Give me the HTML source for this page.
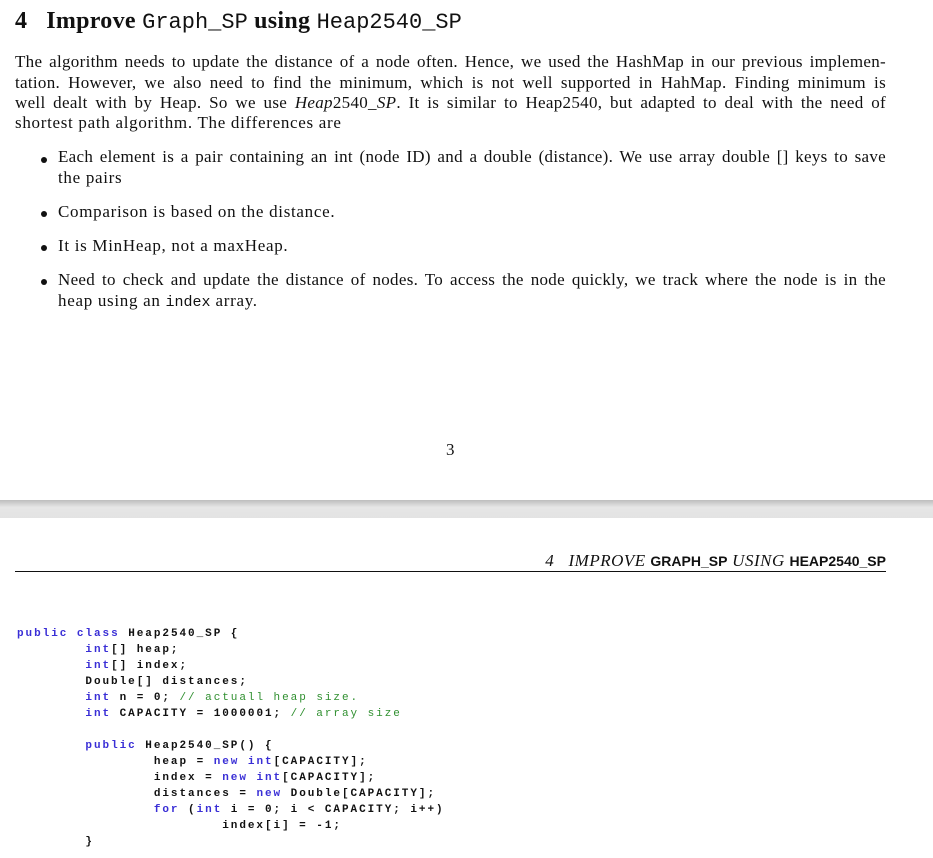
<!DOCTYPE html>
<html><head><meta charset="utf-8"><style>
body{margin:0;width:933px;height:858px;background:#fff;position:relative;overflow:hidden;font-family:"Liberation Serif",serif;color:#111}
.l{position:absolute;white-space:nowrap;font-size:17px;line-height:20px;letter-spacing:0.7px}
.j{text-align:justify;text-align-last:justify;white-space:normal;letter-spacing:0.3px}
.tt{font-family:"Liberation Mono",monospace;font-size:15px;letter-spacing:0}
.c{position:absolute;left:17px;font-family:"Liberation Mono",monospace;font-size:11px;letter-spacing:1.95px;white-space:pre;line-height:16px;color:#111;font-weight:bold}
.k{color:#3a2fd6}
.g{color:#2f8f2f;font-weight:normal}
.b{position:absolute;left:41px;width:6px;height:6px;border-radius:50%;background:#111}
</style></head><body>
<div class="l" style="left:15px;top:6px;font-size:24px;line-height:30px;font-weight:bold;letter-spacing:0.3px">4&nbsp;&nbsp;&nbsp;Improve <span style="font-family:'Liberation Mono',monospace;font-weight:normal;font-size:22px;letter-spacing:0">Graph_SP</span> using <span style="font-family:'Liberation Mono',monospace;font-weight:normal;font-size:22px;letter-spacing:0">Heap2540_SP</span></div>
<div class="l j" style="left:15px;top:52px;width:871px">The algorithm needs to update the distance of a node often. Hence, we used the HashMap in our previous implemen-</div>
<div class="l j" style="left:15px;top:73px;width:871px">tation. However, we also need to find the minimum, which is not well supported in HahMap. Finding minimum is</div>
<div class="l j" style="left:15px;top:93px;width:871px">well dealt with by Heap. So we use <i>Heap</i>2540_<i>SP</i>. It is similar to Heap2540, but adapted to deal with the need of</div>
<div class="l" style="left:15px;top:113px">shortest path algorithm. The differences are</div>
<div class="b" style="top:157px"></div>
<div class="l j" style="left:58px;top:147px;width:828px">Each element is a pair containing an int (node ID) and a double (distance). We use array double [] keys to save</div>
<div class="l" style="left:58px;top:168px">the pairs</div>
<div class="b" style="top:211px"></div>
<div class="l" style="left:58px;top:202px">Comparison is based on the distance.</div>
<div class="b" style="top:245px"></div>
<div class="l" style="left:58px;top:236px">It is MinHeap, not a maxHeap.</div>
<div class="b" style="top:279px"></div>
<div class="l j" style="left:58px;top:270px;width:828px">Need to check and update the distance of nodes. To access the node quickly, we track where the node is in the</div>
<div class="l" style="left:58px;top:291px">heap using an <span class="tt">index</span> array.</div>
<div class="l" style="left:446px;top:440px">3</div>
<div style="position:absolute;left:0;top:500px;width:933px;height:18px;background:linear-gradient(#bdbdbd,#e6e6e6 40%,#e3e3e3)"></div>
<div class="l" style="right:47px;top:551px;font-style:italic;letter-spacing:0.5px">4&nbsp;&nbsp;&nbsp;IMPROVE <span style="font-size:14px;font-weight:bold;font-style:normal;font-family:'Liberation Sans',sans-serif;letter-spacing:0">GRAPH_SP</span> USING <span style="font-size:14px;font-weight:bold;font-style:normal;font-family:'Liberation Sans',sans-serif;letter-spacing:0">HEAP2540_SP</span></div>
<div style="position:absolute;left:15px;top:571px;width:871px;height:1px;background:#111"></div>
<div class="c" style="top:626px"><span class="k">public</span> <span class="k">class</span> Heap2540_SP {
        <span class="k">int</span>[] heap;
        <span class="k">int</span>[] index;
        Double[] distances;
        <span class="k">int</span> n = 0; <span class="g">// actuall heap size.</span>
        <span class="k">int</span> CAPACITY = 1000001; <span class="g">// array size</span>

        <span class="k">public</span> Heap2540_SP() {
                heap = <span class="k">new</span> <span class="k">int</span>[CAPACITY];
                index = <span class="k">new</span> <span class="k">int</span>[CAPACITY];
                distances = <span class="k">new</span> Double[CAPACITY];
                <span class="k">for</span> (<span class="k">int</span> i = 0; i &lt; CAPACITY; i++)
                        index[i] = -1;
        }</div>
</body></html>
